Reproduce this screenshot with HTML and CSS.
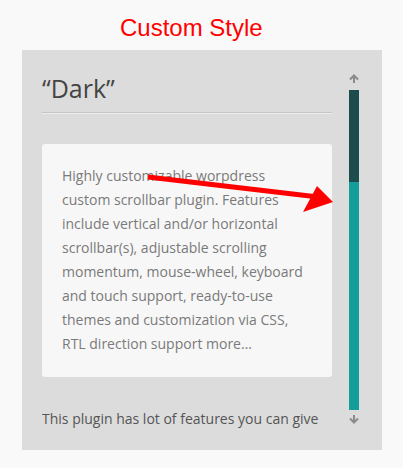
FILE: index.html
```html
<!DOCTYPE html>
<html>
<head>
<meta charset="utf-8">
<link rel="stylesheet" href="styles.css">
</head>
<body>
<h1 class="title">Custom Style</h1>
<div class="panel">
  <div class="content">
    <h2 class="heading">“Dark”</h2>
    <div class="card">
      <p>Highly customizable worpdress<br>custom scrollbar plugin. Features<br>include vertical and/or horizontal<br>scrollbar(s), adjustable scrolling<br>momentum, mouse-wheel, keyboard<br>and touch support, ready-to-use<br>themes and customization via CSS,<br>RTL direction support more…</p>
    </div>
    <p class="more">This plugin has lot of features you can give</p>
  </div>
  <div class="scrollbar">
    <svg class="arrow" width="10" height="10" viewBox="0 0 10 10"><path d="M5 9V1.5M1 5.5L5 1.5L9 5.5" fill="none" stroke="#8a8a8a" stroke-width="2"/></svg>
    <div class="rail"><div class="thumb"></div></div>
    <svg class="arrow down" width="10" height="10" viewBox="0 0 10 10"><path d="M5 1V8.5M1 4.5L5 8.5L9 4.5" fill="none" stroke="#8a8a8a" stroke-width="2"/></svg>
  </div>
  <svg class="pointer" width="360" height="400" viewBox="0 0 360 400">
    <line x1="126" y1="127" x2="292" y2="146.5" stroke="#ff0000" stroke-width="5"/>
    <polygon points="311,152 295,136 281,162" fill="#ff0000"/>
  </svg>
</div>
</body>
</html>
```
FILE: styles.css
```css
* { box-sizing: border-box; }
body {
  margin: 0;
  background: #f9f9f9;
  width: 403px;
  height: 468px;
  overflow: hidden;
}
.title {
  margin: 0;
  height: 50px;
  padding: 14px 0 0 120px;
  font: 400 24px/1.15 "Liberation Sans", Arial, sans-serif;
  color: #ff0000;
}
.panel {
  position: relative;
  margin-left: 22px;
  width: 360px;
  height: 400px;
  background: #dcdcdc;
  display: flex;
  align-items: flex-start;
  padding-left: 20px;
  font-family: "Open Sans", sans-serif;
}
.content {
  width: 290px;
  height: 380px;
  margin-top: 21px;
  overflow: hidden;
}
.heading {
  margin: 0;
  font-size: 25px;
  font-weight: 400;
  line-height: 34px;
  color: #444;
  padding-bottom: 7px;
  border-bottom: 1px solid #c6c6c6;
  box-shadow: 0 1px 0 #ececec;
}
.card {
  margin-top: 31px;
  background: #f7f7f7;
  border-radius: 3px;
  padding: 20px 20px 21px;
}
.card p {
  margin: 0;
  font-size: 14px;
  line-height: 24px;
  color: #7a7a7a;
}
.more {
  margin: 30px 0 0;
  font-size: 14px;
  line-height: 24px;
  color: #555;
}
.scrollbar {
  margin-left: 17px;
  margin-top: 24px;
  width: 10px;
  display: flex;
  flex-direction: column;
}
.arrow { display: block; }
.rail {
  margin-top: 6px;
  height: 320px;
  background: #149d99;
}
.thumb {
  height: 92px;
  background: #1c4c4c;
}
.arrow.down { margin-top: 4px; }
.pointer {
  position: absolute;
  left: 0;
  top: 0;
}
```
